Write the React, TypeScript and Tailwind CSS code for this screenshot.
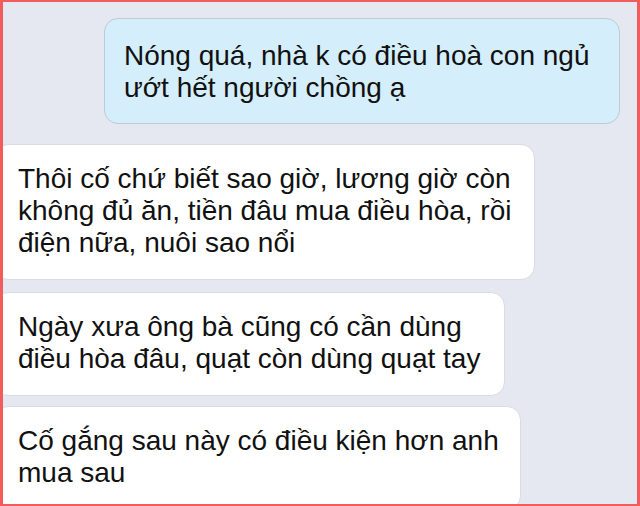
import React from 'react';

type Msg = { me: boolean; lines: string[]; width: string };

const messages: Msg[] = [
  { me: true, lines: ['Nóng quá, nhà k có điều hoà con ngủ', 'ướt hết người chồng ạ'], width: 'w-[516px]' },
  {
    me: false,
    lines: ['Thôi cố chứ biết sao giờ, lương giờ còn', 'không đủ ăn, tiền đâu mua điều hòa, rồi', 'điện nữa, nuôi sao nổi'],
    width: 'w-[541px]',
  },
  { me: false, lines: ['Ngày xưa ông bà cũng có cần dùng', 'điều hòa đâu, quạt còn dùng quạt tay'], width: 'w-[511px]' },
  { me: false, lines: ['Cố gắng sau này có điều kiện hơn anh', 'mua sau'], width: 'w-[527px]' },
];

const Bubble = ({ msg }: { msg: Msg }) => (
  <div
    className={
      msg.me
        ? `${msg.width} self-end mr-[20px] rounded-[14px] border border-[#b9ccd8] bg-[#d4eefb] pl-[19px] pt-[21px] pb-[19px]`
        : `${msg.width} ml-[-6px] rounded-[14px] border border-[#d9dbe2] bg-white pl-[23px] pt-[18px] pb-[20px]`
    }
  >
    {msg.lines.map((l, i) => (
      <div key={i} className="whitespace-nowrap text-[28px] leading-[32px] text-[#111]">
        {l}
      </div>
    ))}
  </div>
);

export default function App() {
  return (
    <div
      className="relative h-[506px] w-[640px] overflow-hidden bg-[#e5e7f1]"
      style={{ fontFamily: '"Liberation Sans", Arial, sans-serif' }}
    >
      <div className="flex flex-col pt-[18px]">
        <Bubble msg={messages[0]} />
        <div className="h-[20px]" />
        <Bubble msg={messages[1]} />
        <div className="h-[12px]" />
        <Bubble msg={messages[2]} />
        <div className="h-[10px]" />
        <Bubble msg={messages[3]} />
      </div>
      <div className="pointer-events-none absolute inset-0 border-t-2 border-b-2 border-l-[3px] border-r-[3px] border-[#f25c5c]" />
    </div>
  );
}
